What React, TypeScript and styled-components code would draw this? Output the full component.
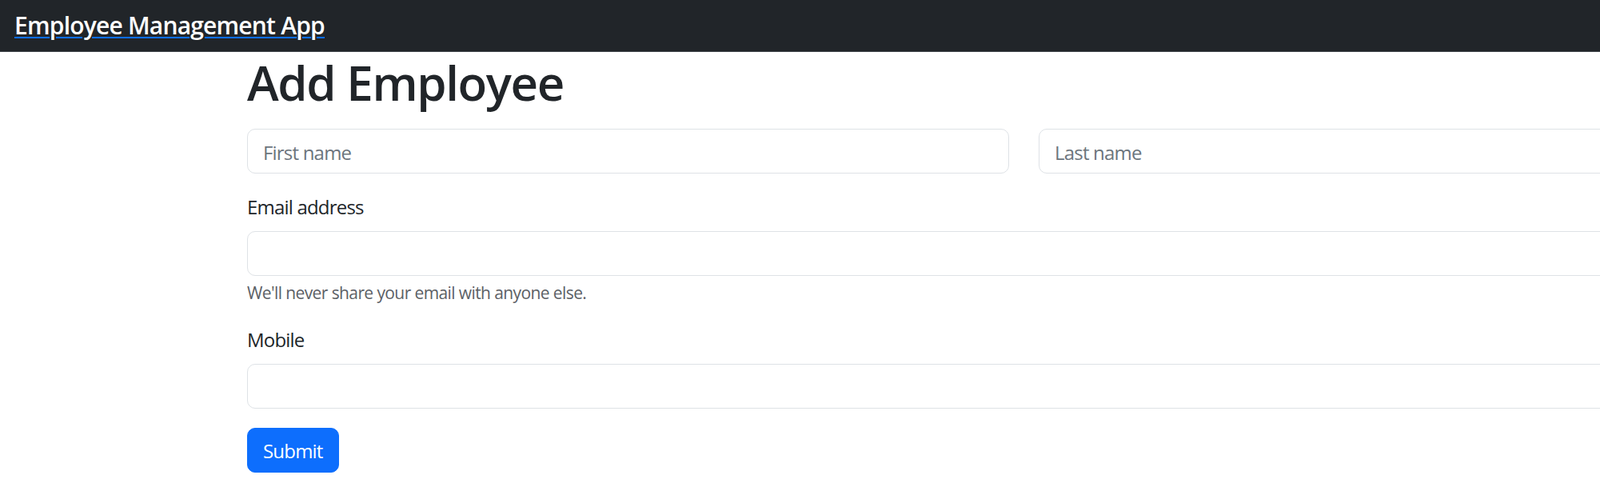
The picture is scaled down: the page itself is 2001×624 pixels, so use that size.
import React from 'react';
import styled, { createGlobalStyle } from 'styled-components';

const GlobalStyle = createGlobalStyle`
  body {
    margin: 0;
    overflow: hidden;
    background: #ffffff;
    color: #212529;
    font-family: "Open Sans", "Noto Sans", sans-serif;
  }
  * {
    box-sizing: border-box;
  }
`;

const App: React.FC = () => {
  return (
    <>
      <GlobalStyle />
      <Navbar>
        <Brand href="#">Employee Management App</Brand>
      </Navbar>
      <Container>
        <Title>Add Employee</Title>
        <form onSubmit={(e) => e.preventDefault()}>
          <NameRow>
            <Input type="text" placeholder="First name" />
            <Input type="text" placeholder="Last name" />
          </NameRow>

          <Field>
            <Label htmlFor="email">Email address</Label>
            <Input id="email" type="email" />
            <Help>We'll never share your email with anyone else.</Help>
          </Field>

          <Field>
            <Label htmlFor="mobile">Mobile</Label>
            <Input id="mobile" type="text" />
          </Field>

          <SubmitButton type="submit">Submit</SubmitButton>
        </form>
      </Container>
    </>
  );
};

const Navbar = styled.nav`
  display: flex;
  align-items: center;
  height: 65px;
  padding: 0 0 1px 18px;
  background-color: #212529;
  border-bottom: 1px solid #42474d;
`;

const Brand = styled.a`
  color: #ffffff;
  font-size: 30px;
  font-weight: 600;
  letter-spacing: -0.8px;
  line-height: 1.5;
  text-decoration: underline;
  text-decoration-color: #0d6efd;
  text-decoration-thickness: 2px;
  text-underline-offset: 3px;
`;

const Container = styled.main`
  width: 2252px;
  padding-left: 309px;
`;

const Title = styled.h1`
  margin: 0 0 19px;
  font-size: 60px;
  font-weight: 600;
  letter-spacing: -1.4px;
  line-height: 76.8px;
  color: #212529;
`;

const NameRow = styled.div`
  display: grid;
  grid-template-columns: 953px 953px;
  column-gap: 37px;
  margin-bottom: 23px;
`;

const Field = styled.div`
  margin-bottom: 22px;
`;

const Label = styled.label`
  display: block;
  margin-bottom: 11px;
  font-size: 24px;
  letter-spacing: -0.8px;
  line-height: 38.4px;
  color: #212529;
`;

const Input = styled.input`
  display: block;
  width: 100%;
  height: 56px;
  padding: 3px 19px 0;
  font-family: inherit;
  font-size: 24px;
  letter-spacing: -0.8px;
  color: #212529;
  background: #ffffff;
  border: 1px solid #dee2e6;
  border-radius: 10px;
  outline: none;

  &::placeholder {
    color: #6c757d;
    opacity: 1;
  }
`;

const Help = styled.div`
  margin-top: 5px;
  font-size: 21px;
  letter-spacing: -0.6px;
  line-height: 33.6px;
  color: #5c6166;
`;

const SubmitButton = styled.button`
  height: 56px;
  margin-top: 2px;
  padding: 0 19px;
  font-family: inherit;
  font-size: 24px;
  letter-spacing: -0.8px;
  color: #ffffff;
  background-color: #0d6efd;
  border: 1px solid #0d6efd;
  border-radius: 10px;
  cursor: pointer;
`;

export default App;
